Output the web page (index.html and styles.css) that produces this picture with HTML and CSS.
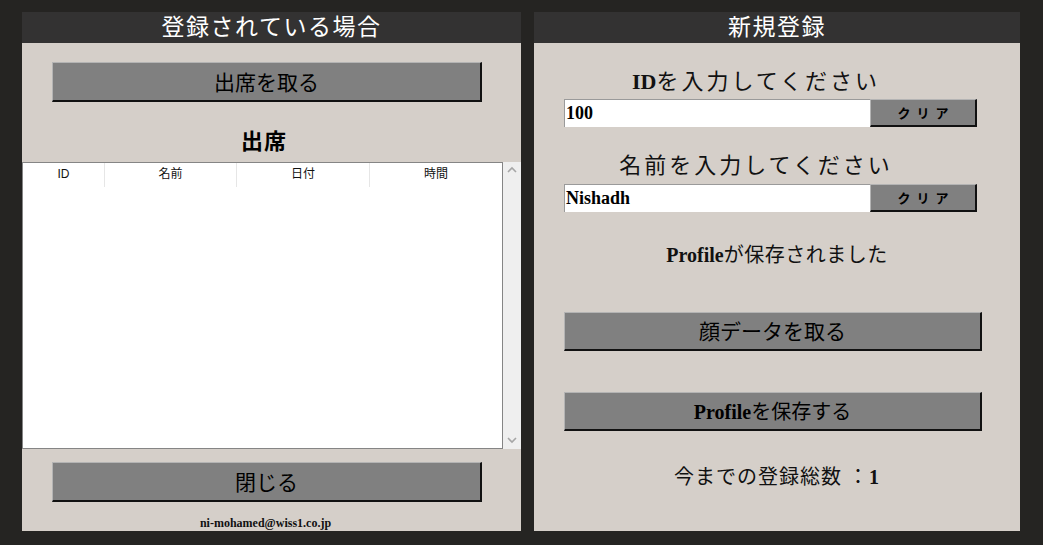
FILE: index.html
```html
<!DOCTYPE html>
<html lang="ja">
<head>
<meta charset="utf-8">
<title>出席管理</title>
<link rel="stylesheet" href="styles.css">
</head>
<body>
<div class="app">
  <section class="panel panel-left">
    <h1 class="panel-title">登録されている場合</h1>
    <div class="panel-body">
      <button class="btn btn-wide">出席を取る</button>
      <h2 class="section-title">出席</h2>
      <div class="table-wrap">
        <div class="grid">
          <div class="grid-head">
            <div class="col col-id">ID</div>
            <div class="col col-name">名前</div>
            <div class="col col-date">日付</div>
            <div class="col col-time">時間</div>
          </div>
        </div>
        <div class="scrollbar">
          <svg class="arrow" width="12" height="8" viewBox="0 0 12 8"><path d="M2 6 L6 2 L10 6" fill="none" stroke="#a6a6a6" stroke-width="1.6"/></svg>
          <svg class="arrow" width="12" height="8" viewBox="0 0 12 8"><path d="M2 2 L6 6 L10 2" fill="none" stroke="#a6a6a6" stroke-width="1.6"/></svg>
        </div>
      </div>
      <button class="btn btn-wide btn-close">閉じる</button>
      <p class="email">ni-mohamed@wiss1.co.jp</p>
    </div>
  </section>
  <section class="panel panel-right">
    <h1 class="panel-title">新規登録</h1>
    <div class="panel-body right-body">
      <p class="label label-first"><b>ID</b>を入力してください</p>
      <div class="field-row">
        <div class="input">100</div>
        <button class="btn btn-clear">クリア</button>
      </div>
      <p class="label label-second">名前を入力してください</p>
      <div class="field-row">
        <div class="input">Nishadh</div>
        <button class="btn btn-clear">クリア</button>
      </div>
      <p class="status"><b>Profile</b>が保存されました</p>
      <button class="btn btn-action btn-face">顔データを取る</button>
      <button class="btn btn-action btn-save"><b>Profile</b>を保存する</button>
      <p class="total">今までの登録総数 ：<b>1</b></p>
    </div>
  </section>
</div>
</body>
</html>
```
FILE: styles.css
```css
* { box-sizing: border-box; }
html, body {
  margin: 0;
  padding: 0;
  background: #252422;
  width: 1043px;
  height: 545px;
  overflow: hidden;
  font-family: "Liberation Serif", "Noto Sans CJK JP", serif;
}
.app {
  display: flex;
  gap: 13px;
  padding: 12px 0 0 22px;
}
.panel {
  height: 519px;
  background: #d5cfc9;
  display: flex;
  flex-direction: column;
}
.panel-left { width: 499px; }
.panel-right { width: 486px; }
.panel-title {
  margin: 0;
  height: 31px;
  line-height: 31px;
  background: #333232;
  color: #fff;
  font-size: 23px;
  font-weight: normal;
  text-align: center;
  letter-spacing: 1.5px;
}
.panel-body {
  display: flex;
  flex-direction: column;
  flex: 1;
}
.btn {
  font-family: "Liberation Serif", "Noto Sans CJK JP", serif;
  background: #808080;
  color: #000;
  border-style: solid;
  border-width: 1px 2px 2px 1px;
  border-color: #b4b4b4 #111 #111 #b4b4b4;
  padding: 0 0 2px;
  cursor: pointer;
}
.btn-wide {
  margin: 19px 0 0 30px;
  width: 430px;
  height: 40px;
  font-size: 21px;
}
.section-title {
  margin: 25px 15px 0 0;
  height: 30px;
  line-height: 30px;
  text-align: center;
  font-size: 22px;
  font-weight: bold;
  letter-spacing: 1px;
}
.table-wrap {
  margin-top: 5px;
  height: 287px;
  display: flex;
}
.grid {
  flex: 1;
  background: #fff;
  border: 1px solid #858585;
}
.grid-head {
  display: flex;
  height: 24px;
  font-family: "Liberation Sans", "Noto Sans CJK JP", sans-serif;
  font-size: 12px;
  color: #111;
}
.col {
  text-align: center;
  line-height: 22px;
  border-right: 1px solid #e6e6e6;
}
.col-id { width: 82px; }
.col-name { width: 132px; }
.col-date { width: 133px; }
.col-time { flex: 1; border-right: none; }
.scrollbar {
  width: 18px;
  background: #efefef;
  display: flex;
  flex-direction: column;
  justify-content: space-between;
  align-items: center;
  padding: 4px 0 5px;
}
.btn-close { margin-top: 13px; }
.email {
  margin: 13px 12px 0 0;
  line-height: 16px;
  text-align: center;
  font-size: 12px;
  font-weight: bold;
  color: #111;
}
.label {
  margin: 0 42px 0 0;
  height: 30px;
  line-height: 30px;
  text-align: center;
  font-size: 22px;
  letter-spacing: 3px;
  color: #111;
}
.label b { letter-spacing: 0; }
.label-first { margin-top: 24px; }
.label-second { margin-top: 24px; }
.field-row {
  display: flex;
  margin: 2px 0 0 30px;
  height: 28px;
}
.label-second + .field-row { margin-top: 3px; }
.input {
  width: 306px;
  height: 28px;
  background: #fff;
  border-top: 1px solid #9a9a9a;
  border-left: 1px solid #9a9a9a;
  font-size: 18px;
  font-weight: bold;
  line-height: 27px;
  padding-left: 1px;
  color: #000;
}
.btn-clear {
  width: 107px;
  height: 28px;
  font-size: 13px;
  font-weight: bold;
  letter-spacing: 6px;
  padding: 0 0 0 6px;
}
.status {
  margin: 30px 0 0;
  line-height: 26px;
  text-align: center;
  font-size: 20px;
  color: #111;
  letter-spacing: 0.5px;
}
.status b { letter-spacing: 0; }
.btn-action {
  margin-left: 30px;
  width: 418px;
  height: 39px;
  font-size: 21px;
}
.btn-face { margin-top: 44px; }
.btn-save { margin-top: 41px; font-size: 20px; }
.total {
  margin: 31px 0 0;
  line-height: 30px;
  text-align: center;
  font-size: 20px;
  color: #111;
  letter-spacing: 1px;
}
```
